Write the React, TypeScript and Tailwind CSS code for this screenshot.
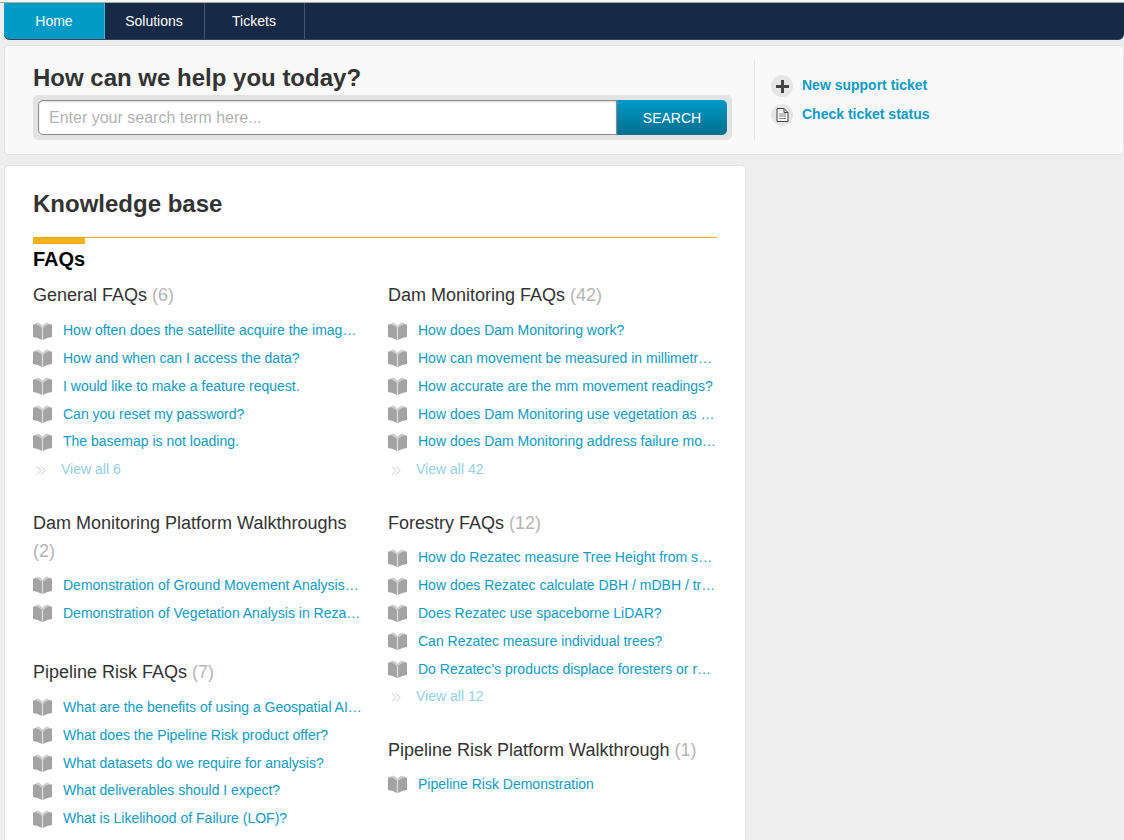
const font = { fontFamily: '"Liberation Sans", Arial, sans-serif' };

function Book() {
  return (
    <svg width="19" height="18" viewBox="0 0 20 18" preserveAspectRatio="none" className="shrink-0">
      <path d="M0 3 L5 0.5 C7 1 9 2.2 10 4 C11 2.2 13 1 15 0.5 L20 3 L10 8 Z" fill="#cfcfcf" />
      <path d="M0 3 L2 2.2 C5 2.8 7.5 4 9.4 6 V18 C6.5 16.4 3.5 15.4 0 15 Z" fill="#a3a3a3" />
      <path d="M20 3 L18 2.2 C15 2.800 12.5 4 10.6 6 V18 C13.5 16.4 16.5 15.4 20 15 Z" fill="#a3a3a3" />
      <path d="M9.4 6 H10.6 V18 H9.4 Z" fill="#dcdcdc" />
    </svg>
  );
}

function Section({ title, count, items, viewAll, className = "", listClass = "mt-[7.8px]" }: { title: string; count: number; items: string[]; viewAll?: boolean; className?: string; listClass?: string }) {
  return (
    <section className={className}>
      <h3 className="text-[18px] leading-[28px] text-[#333]">
        {title} <span className="text-[#b5b5b5]">({count})</span>
      </h3>
      <ul className={listClass}>
        {items.map((t) => (
          <li key={t} className="flex h-[27.8px] items-center gap-[11px]">
            <Book />
            <a className="truncate text-[14px] text-[#0f9bc4]">{t}</a>
          </li>
        ))}
      </ul>
      {viewAll && (
        <div className="flex h-[28px] items-center text-[14px] text-[#92d0e4]">
          <svg width="10" height="9" viewBox="0 0 10 9" className="ml-[3px] mr-[15px] mt-[2px] shrink-0" fill="none" stroke="#c4c4c4">
            <path d="M1 .5l4 4-4 4M5 .5l4 4-4 4" />
          </svg>
          <span>View all {count}</span>
        </div>
      )}
    </section>
  );
}

export default function App() {
  return (
    <div style={font} className="h-[840px] overflow-hidden bg-[#eeeeee]">
      <div className="h-[3px] border-b border-[#a8a8a8] bg-[#f5f5f5]" />
      <nav className="ml-[4px] flex h-[37px] overflow-hidden rounded-b-[6px] border-b border-[#2c4660] bg-[#162a47]">
        <a className="flex w-[101px] items-center justify-center border-r border-[#3bb4d6] bg-[#009ac6] text-[14px] text-white">Home</a>
        <a className="flex w-[100px] items-center justify-center border-r border-[#46566f] pr-px text-[14px] text-white">Solutions</a>
        <a className="flex w-[100px] items-center justify-center border-r border-[#46566f] pr-px text-[14px] text-white">Tickets</a>
      </nav>
      <header className="ml-[4px] mt-[5px] flex h-[110px] rounded-[5px] border border-[#e3e3e3] bg-[#f9f9f9]">
        <div className="w-[749px] pl-[28px] pt-[18px]">
          <h1 className="text-[24px] font-bold leading-[28px] text-[#333]">How can we help you today?</h1>
          <div className="mt-[3px] flex h-[45px] w-[699px] rounded-[5px] bg-[#e3e3e3] p-[5px]">
            <div className="flex flex-1 items-center rounded-l-[5px] border border-[#8a8a8a] bg-white pl-[10px] text-[16px] text-[#b3b3b3] shadow-[inset_0_1px_2px_rgba(0,0,0,0.15)]">Enter your search term here...</div>
            <button className="flex w-[110px] items-center justify-center rounded-r-[5px] bg-gradient-to-b from-[#009ac6] to-[#006f8f] pt-px text-[14px] text-white">SEARCH</button>
          </div>
        </div>
        <div className="mt-[14px] h-[80px] border-l border-[#e5e5e5] pl-[16px] pt-[11px]">
          <div className="flex h-[29px] items-center gap-[9px] text-[14px] font-bold text-[#0f9bc4]">
            <span className="mt-px flex h-[22px] w-[22px] items-center justify-center rounded-full bg-[#e6e6e6]">
              <svg width="15" height="15" viewBox="0 0 15 15"><path d="M6 1h3v5h5v3H9v5H6V9H1V6h5z" fill="#444" /></svg>
            </span>
            New support ticket
          </div>
          <div className="flex h-[29px] items-center gap-[9px] text-[14px] font-bold text-[#0f9bc4]">
            <span className="mt-px flex h-[22px] w-[22px] items-center justify-center rounded-full bg-[#e6e6e6]">
              <svg width="13" height="14" viewBox="0 0 13 14"><path d="M1 .5h7l4 4v9H1z" fill="#f5f5f5" stroke="#444" /><path d="M8 .5v4h4" fill="none" stroke="#444" /><path d="M3 6h7M3 8h7M3 10.500h7" stroke="#888" /></svg>
            </span>
            Check ticket status
          </div>
        </div>
      </header>
      <main className="ml-[4px] mt-[10px] h-[700px] w-[742px] rounded-[5px] border border-[#e3e3e3] bg-white px-[28px] pt-[22px]">
        <h2 className="text-[24px] font-bold leading-[32px] text-[#333]">Knowledge base</h2>
        <div className="mt-[17px] border-t border-[#f5b01c]">
          <div className="-mt-px h-[7px] w-[52px] bg-[#f5b01c]" />
        </div>
        <h3 className="mt-[3px] text-[20px] font-bold leading-[24px] text-black">FAQs</h3>
        <div className="mt-[10px] grid grid-cols-2 gap-x-[26px]">
          <div className="flex flex-col gap-[24.8px]">
            <Section title="General FAQs" count={6} viewAll items={["How often does the satellite acquire the imagery?", "How and when can I access the data?", "I would like to make a feature request.", "Can you reset my password?", "The basemap is not loading."]} />
            <Section title="Dam Monitoring Platform Walkthroughs" count={2} listClass="mt-[6.8px]" items={["Demonstration of Ground Movement Analysis in Rezatec", "Demonstration of Vegetation Analysis in Rezatec Portal"]} />
            <Section title="Pipeline Risk FAQs" count={7} className="mt-[6px]" items={["What are the benefits of using a Geospatial AI solution?", "What does the Pipeline Risk product offer?", "What datasets do we require for analysis?", "What deliverables should I expect?", "What is Likelihood of Failure (LOF)?"]} />
          </div>
          <div className="flex flex-col gap-[24.8px]">
            <Section title="Dam Monitoring FAQs" count={42} viewAll items={["How does Dam Monitoring work?", "How can movement be measured in millimetres from space?", "How accurate are the mm movement readings?", "How does Dam Monitoring use vegetation as an indicator?", "How does Dam Monitoring address failure modes in dams?"]} />
            <Section title="Forestry FAQs" count={12} viewAll listClass="mt-[7.4px]" items={["How do Rezatec measure Tree Height from satellite data?", "How does Rezatec calculate DBH / mDBH / tree volume?", "Does Rezatec use spaceborne LiDAR?", "Can Rezatec measure individual trees?", "Do Rezatec’s products displace foresters or replace them?"]} />
            <Section title="Pipeline Risk Platform Walkthrough" count={1} className="mt-[0.6px]" listClass="mt-[6px]" items={["Pipeline Risk Demonstration"]} />
          </div>
        </div>
      </main>
    </div>
  );
}
